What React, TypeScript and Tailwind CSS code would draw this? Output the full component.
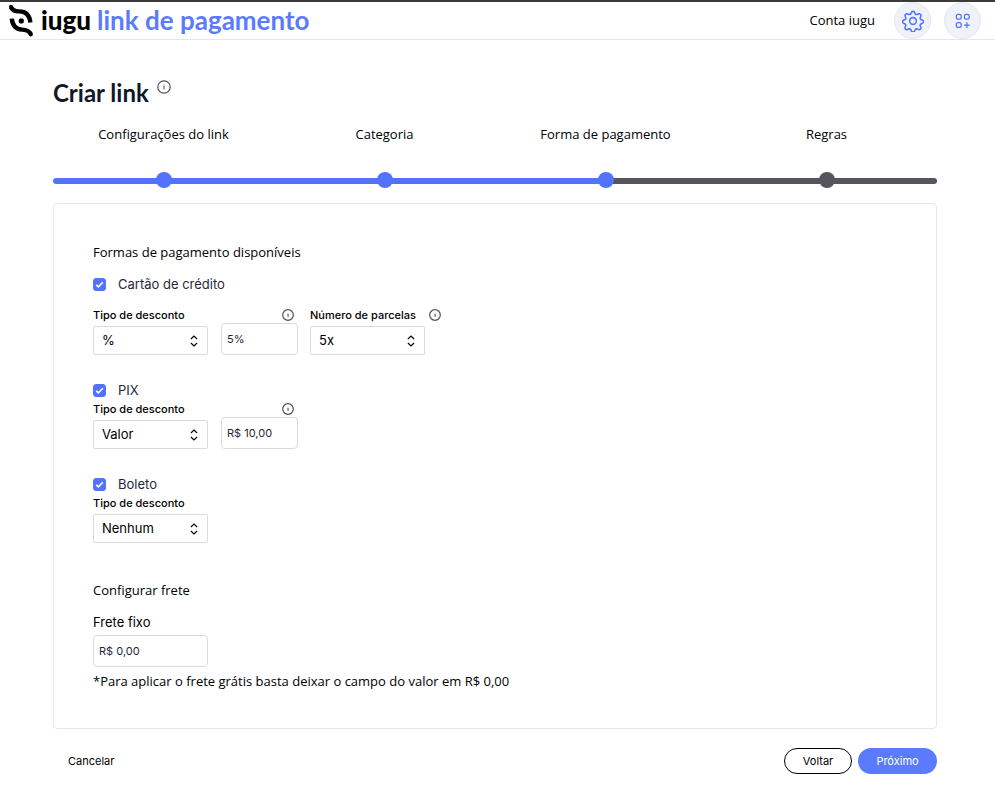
import { useState } from "react";

const brandFont = "font-[Lato,'Open_Sans',sans-serif]";
const copyFont = "font-['Open_Sans',Lato,sans-serif] text-[13px] leading-5";

function InfoIcon({ large = false }: { large?: boolean }) {
  return (
    <svg
      viewBox="0 0 14 14"
      className={large ? "size-[14px] shrink-0" : "size-3 shrink-0"}
      fill="none"
      stroke="#4b5060"
      aria-hidden="true"
    >
      <circle cx="7" cy="7" r="6.2" strokeWidth={large ? 1.2 : 1.4} />
      <path d="M6.3 6.4H7.1V9.4" strokeWidth={large ? 1 : 1.2} />
      <circle cx="7" cy="4.8" r="0.5" fill="#4b5060" stroke="none" />
    </svg>
  );
}

function Logo() {
  return (
    <svg viewBox="0 0 27 34" className="h-[34px] w-[27px] shrink-0" fill="none" stroke="#000" aria-hidden="true">
      <path d="M2.8 3C4.4 6.4 7 7.4 10.5 7.4C17.5 7.2 21.6 11 22.4 18.6" strokeWidth="4.4" />
      <path d="M3.8 14.6C4.4 21.2 7.8 25.2 14 25.6C18.5 25.8 21.4 27 23 30.4" strokeWidth="4.4" />
      <circle cx="3" cy="2.8" r="2" fill="#000" stroke="none" />
      <circle cx="22.8" cy="30.6" r="2" fill="#000" stroke="none" />
      <rect x="10.8" y="14.6" width="5" height="4.8" rx="1.6" fill="#000" stroke="none" />
    </svg>
  );
}

function GearIcon() {
  return (
    <svg viewBox="0 0 24 24" className="size-[22px]" fill="none" stroke="#5273ff" strokeWidth="1.7" strokeLinejoin="round" aria-hidden="true">
      <circle cx="12" cy="12" r="3.7" />
      <path d="M10.1 2.9a2 2 0 0 1 3.8 0l.3.8a2 2 0 0 0 2.7 1.1l.8-.4a2 2 0 0 1 2.7 2.7l-.4.8a2 2 0 0 0 1.1 2.7l.8.3a2 2 0 0 1 0 3.8l-.8.3a2 2 0 0 0-1.1 2.7l.4.8a2 2 0 0 1-2.7 2.7l-.8-.4a2 2 0 0 0-2.7 1.1l-.3.8a2 2 0 0 1-3.8 0l-.3-.8a2 2 0 0 0-2.7-1.1l-.8.4a2 2 0 0 1-2.7-2.7l.4-.8a2 2 0 0 0-1.1-2.7l-.8-.3a2 2 0 0 1 0-3.8l.8-.3A2 2 0 0 0 4 7.9l-.4-.8a2 2 0 0 1 2.7-2.7l.8.4a2 2 0 0 0 2.7-1.1z" />
    </svg>
  );
}

function AppsIcon() {
  return (
    <svg viewBox="0 0 16 16" className="size-4" fill="none" stroke="#5273ff" strokeWidth="1.3" aria-hidden="true">
      <rect x="1.4" y="1.4" width="4.8" height="4.8" rx="1.6" />
      <rect x="9.4" y="1.4" width="4.8" height="4.8" rx="1.6" />
      <rect x="1.4" y="9.6" width="4.8" height="4.8" rx="1.6" />
      <path d="M11.9 9.2v5.8M9 12.1h5.8" />
    </svg>
  );
}

function Steps() {
  const steps = [
    { label: "Configurações do link", left: true, right: true },
    { label: "Categoria", left: true, right: true },
    { label: "Forma de pagamento", left: true, right: false },
    { label: "Regras", left: false, right: false },
  ];
  return (
    <ol className="mt-[15px] grid grid-cols-4">
      {steps.map((s, i) => (
        <li key={s.label}>
          <p className={`text-center text-black ${copyFont}`}>{s.label}</p>
          <div className="relative mt-[34px] flex h-[6px]">
            <span className={`flex-1 ${s.left ? "bg-[#5273ff]" : "bg-[#55555e]"} ${i === 0 ? "rounded-l-full" : ""}`} />
            <span className={`flex-1 ${s.right ? "bg-[#5273ff]" : "bg-[#55555e]"} ${i === 3 ? "rounded-r-full" : ""}`} />
            <span
              className={`absolute -top-[6px] left-1/2 size-4 -translate-x-1/2 rounded-full ${s.left ? "bg-[#5273ff]" : "bg-[#55555e]"}`}
            />
          </div>
        </li>
      ))}
    </ol>
  );
}

function Check({ id, label }: { id: string; label: string }) {
  const [on, setOn] = useState(true);
  return (
    <div className="flex h-5 items-center">
      <span className="relative flex size-[13px]">
        <input
          id={id}
          type="checkbox"
          checked={on}
          onChange={(e) => setOn(e.target.checked)}
          className="peer size-[13px] appearance-none rounded-[3px] border border-[#5273ff] checked:bg-[#5273ff]"
        />
        <svg
          viewBox="0 0 13 13"
          className="pointer-events-none absolute inset-0 hidden size-[13px] peer-checked:block"
          fill="none"
          stroke="#fff"
          strokeWidth="1.6"
          aria-hidden="true"
        >
          <path d="M3.2 6.8L5.4 8.9L9.8 4.3" />
        </svg>
      </span>
      <label htmlFor={id} className="ml-3 text-[13px] leading-5 text-[#1f2937]">
        {label}
      </label>
    </div>
  );
}

function SelectField({ id, label, options, value }: { id: string; label: string; options: string[]; value: string }) {
  return (
    <div className="w-[115px]">
      <label htmlFor={id} className="block text-[11px] leading-4 font-medium whitespace-nowrap text-black">
        {label}
      </label>
      <div className="relative mt-[3px]">
        <select
          id={id}
          defaultValue={value}
          className="block h-[29px] w-full appearance-none rounded-[2px] border border-[#d9dbe0] bg-white pr-6 pl-2 text-[13px] text-black"
        >
          {options.map((o) => (
            <option key={o}>{o}</option>
          ))}
        </select>
        <svg
          viewBox="0 0 8 12"
          className="pointer-events-none absolute top-[9px] right-[10px] h-3 w-2"
          fill="none"
          stroke="#000"
          strokeWidth="1.2"
          aria-hidden="true"
        >
          <path d="M0.9 4L4 1L7.1 4M0.9 8L4 11L7.1 8" />
        </svg>
      </div>
    </div>
  );
}

function ValueField({ label, value }: { label: string; value: string }) {
  return (
    <div className="ml-[13px] w-[77px]">
      <div className="flex justify-end pr-1 pb-[2px]">
        <InfoIcon />
      </div>
      <input
        aria-label={label}
        defaultValue={value}
        className="block h-8 w-full rounded-[4px] border border-[#d9dbe0] px-[5px] text-[11px] text-[#1f2937]"
      />
    </div>
  );
}

export default function App() {
  const discounts = ["Nenhum", "%", "Valor"];
  return (
    <div className="bg-white font-[Inter,'Liberation_Sans',sans-serif] text-black">
      <header className="flex h-10 items-center border-t-2 border-b border-t-[#3c3a3a] border-b-[#e5e7eb] pr-[14px] pl-2">
        <Logo />
        <div className={`flex items-baseline pb-[2px] text-[26px] leading-8 ${brandFont}`}>
          <span className="ml-[6px] font-black">iugu</span>
          <span className="ml-[6px] font-bold text-[#5b7bff]">link de pagamento</span>
        </div>
        <span className="ml-auto pb-[2px] font-['Open_Sans',Lato,sans-serif] text-[13px] leading-5">Conta iugu</span>
        <button aria-label="Configurações" className="ml-[19px] grid size-[37px] place-items-center rounded-full border border-[#e3e7ee] bg-[#eff3f9]">
          <GearIcon />
        </button>
        <button aria-label="Aplicativos" className="ml-[13px] grid size-[37px] place-items-center rounded-full border border-[#e3e7ee] bg-[#eff3f9]">
          <AppsIcon />
        </button>
      </header>

      <main className="pt-[37px] pr-[58px] pb-6 pl-[53px]">
        <div className="flex items-start">
          <h1 className={`text-2xl leading-8 font-bold text-[#111827] ${brandFont}`}>Criar link</h1>
          <span className="mt-[3px] ml-2">
            <InfoIcon large />
          </span>
        </div>

        <Steps />

        <form onSubmit={(e) => e.preventDefault()}>
          <div className="mt-[19px] rounded-[4px] border border-[#e5e7eb] px-[39px] pt-[38px] pb-[37px]">
            <h2 className={`font-normal ${copyFont}`}>Formas de pagamento disponíveis</h2>

            <div className="mt-3">
              <Check id="cartao" label="Cartão de crédito" />
              <div className="mt-[13px] flex items-end">
                <SelectField id="cartao-tipo" label="Tipo de desconto" options={discounts} value="%" />
                <ValueField label="Desconto no cartão" value="5%" />
                <div className="ml-3 flex items-start">
                  <SelectField id="parcelas" label="Número de parcelas" options={["1x", "2x", "3x", "4x", "5x"]} value="5x" />
                  <span className="ml-1 pt-[2px]">
                    <InfoIcon />
                  </span>
                </div>
              </div>
            </div>

            <div className="mt-[25px]">
              <Check id="pix" label="PIX" />
              <div className="mt-px flex items-end">
                <SelectField id="pix-tipo" label="Tipo de desconto" options={discounts} value="Valor" />
                <ValueField label="Desconto no PIX" value="R$ 10,00" />
              </div>
            </div>

            <div className="mt-[25px]">
              <Check id="boleto" label="Boleto" />
              <div className="mt-px flex items-end">
                <SelectField id="boleto-tipo" label="Tipo de desconto" options={discounts} value="Nenhum" />
              </div>
            </div>

            <h2 className={`mt-[37px] font-normal ${copyFont}`}>Configurar frete</h2>
            <label htmlFor="frete" className="mt-3 block text-[13px] leading-5 text-black">
              Frete fixo
            </label>
            <input
              id="frete"
              defaultValue="R$ 0,00"
              className="mt-[3px] block h-8 w-[115px] rounded-[4px] border border-[#d9dbe0] px-[5px] text-[11px] text-[#1f2937]"
            />
            <p className={`mt-1 ${copyFont}`}>*Para aplicar o frete grátis basta deixar o campo do valor em R$ 0,00</p>
          </div>

          <div className="mt-[19px] flex items-center text-[11px]">
            <button type="button" className="h-[26px] px-[15px]">
              Cancelar
            </button>
            <button type="button" className="ml-auto h-[26px] w-[68px] rounded-full border border-black bg-white">
              Voltar
            </button>
            <button type="submit" className="ml-[6px] h-[26px] w-[79px] rounded-full bg-[#5b7bff] text-white">
              Próximo
            </button>
          </div>
        </form>
      </main>
    </div>
  );
}
